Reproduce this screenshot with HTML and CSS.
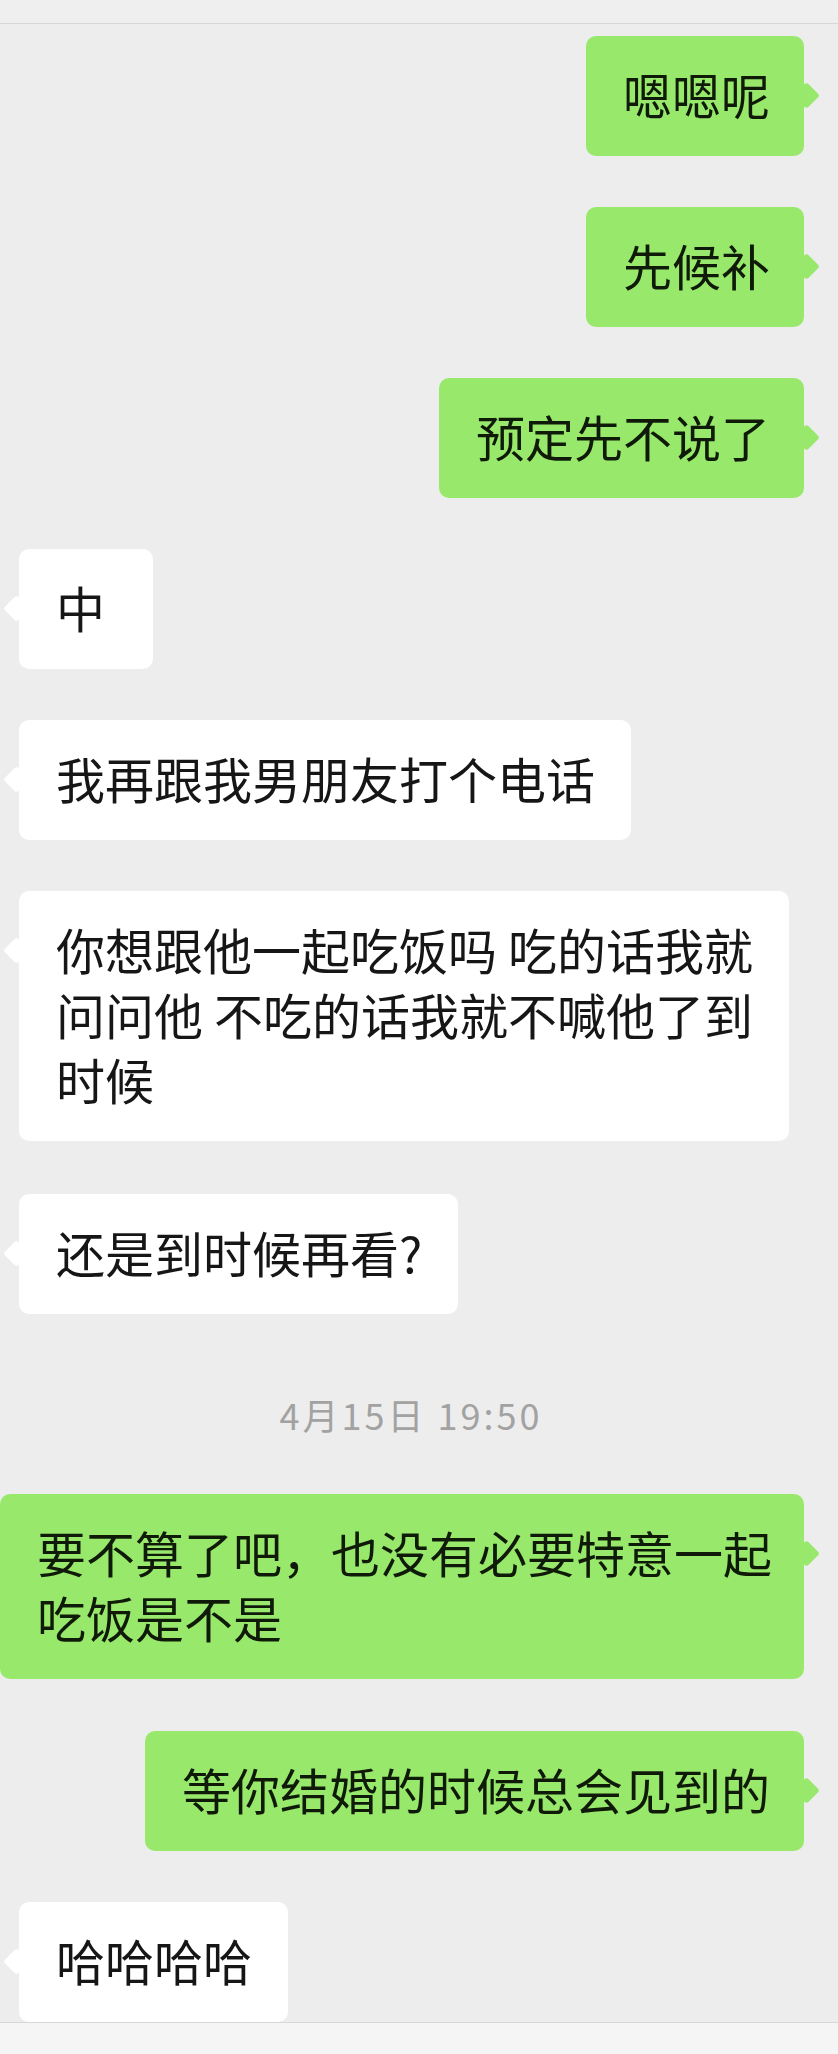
FILE: index.html
```html
<!DOCTYPE html>
<html lang="zh-CN">
<head>
<meta charset="utf-8">
<title>聊天记录</title>
<link rel="stylesheet" href="styles.css">
</head>
<body>
<div class="screen">
  <div class="topbar"></div>
  <div class="chat">
    <div class="row me"><div class="bubble green">嗯嗯呢</div></div>
    <div class="row me"><div class="bubble green">先候补</div></div>
    <div class="row me"><div class="bubble green">预定先不说了</div></div>
    <div class="row them"><div class="bubble white">中</div></div>
    <div class="row them"><div class="bubble white">我再跟我男朋友打个电话</div></div>
    <div class="row them tall"><div class="bubble white">你想跟他一起吃饭吗 吃的话我就<br>问问他 不吃的话我就不喊他了到<br>时候</div></div>
    <div class="row them"><div class="bubble white">还是到时候再看?</div></div>
    <div class="time">4月15日 19:50</div>
    <div class="row me tall2"><div class="bubble green">要不算了吧，也没有必要特意一起<br>吃饭是不是</div></div>
    <div class="row me"><div class="bubble green">等你结婚的时候总会见到的</div></div>
    <div class="row them"><div class="bubble white">哈哈哈哈</div></div>
  </div>
  <div class="bottombar"></div>
</div>
</body>
</html>
```

FILE: styles.css
```css
html, body {
  margin: 0;
  padding: 0;
  background: #ededed;
}

body {
  font-family: "Noto Sans CJK SC", "Noto Sans", sans-serif;
}

.screen {
  width: 838px;
  height: 2054px;
  display: flex;
  flex-direction: column;
  overflow: hidden;
}

.topbar {
  flex: none;
  height: 23px;
  background: #efefef;
  border-bottom: 1px solid #d6d6d6;
}

.chat {
  flex: 1;
  min-height: 0;
  display: flex;
  flex-direction: column;
  gap: 51px;
  padding-top: 12px;
  overflow: hidden;
}

.row {
  display: flex;
  flex: none;
}

.row.me {
  justify-content: flex-end;
  padding-right: 34px;
}

.row.them {
  justify-content: flex-start;
  padding-left: 19px;
}

.row.tall {
  margin-bottom: 2px;
}

.row.tall2 {
  margin-bottom: 1px;
}

.bubble {
  position: relative;
  box-sizing: border-box;
  min-width: 134px;
  padding: 25px 36px 30px 37px;
  border-radius: 10px;
  font-size: 49px;
  line-height: 65px;
  white-space: nowrap;
  color: #161616;
}

.bubble.green {
  background: #98e96b;
  padding-right: 34px;
  color: #0f1a09;
}

.bubble.white {
  background: #ffffff;
}

.bubble::after {
  content: "";
  position: absolute;
  top: 50px;
  width: 19px;
  height: 19px;
  border-radius: 3px;
  background: inherit;
  transform: rotate(45deg);
}

.bubble.green::after {
  right: -12px;
}

.bubble.white::after {
  left: -12px;
}

.time {
  flex: none;
  align-self: center;
  margin: 24px 16px 4px 0;
  font-size: 36px;
  line-height: 50px;
  letter-spacing: 3px;
  color: #a2a2a2;
}

.bottombar {
  flex: none;
  height: 31px;
  background: #f5f5f5;
  border-top: 1px solid #d8d8d8;
}
```
